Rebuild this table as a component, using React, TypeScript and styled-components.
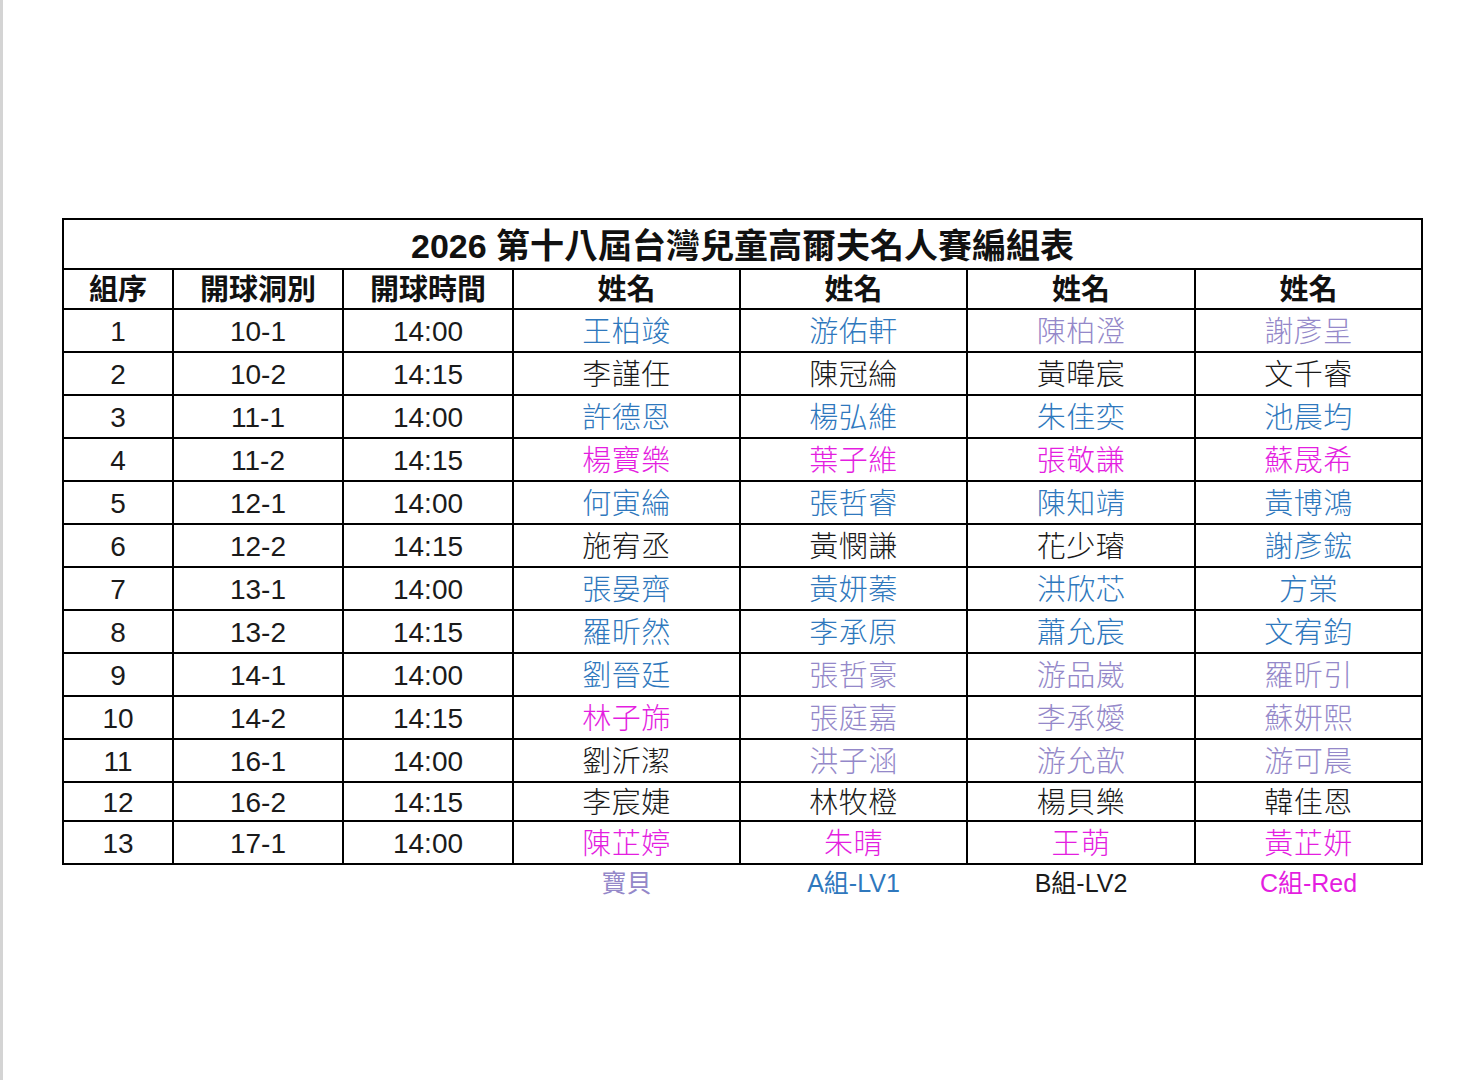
import styled, {createGlobalStyle} from 'styled-components';

const GlobalStyle = createGlobalStyle`
  html, body {
    margin: 0;
    padding: 0;
    background: #ffffff;
  }
`;

type Tone = 'black' | 'blue' | 'lavender' | 'magenta';

const toneColor: Record<Tone, string> = {
  black: '#1a1a1a',
  blue: '#2f78bd',
  lavender: '#9488c9',
  magenta: '#e41ee0',
};

const Page = styled.div`
  box-sizing: border-box;
  min-height: 100vh;
  border-left: 3px solid #d4d4d4;
  padding: 218px 0 0 59px;
  font-family: 'Liberation Sans', 'Noto Sans CJK TC', sans-serif;
  color: #111111;
`;

const Sheet = styled.table`
  border-collapse: collapse;
  table-layout: fixed;
  width: 1359px;
`;

const Row = styled.tr<{$h: number}>`
  height: ${({$h}) => $h}px;
`;

const TitleCell = styled.th`
  padding: 3px 0 0;
  border: 2px solid #000000;
  font-size: 34px;
  font-weight: 700;
  text-align: center;
  vertical-align: middle;
  line-height: 1;
`;

const HeadCell = styled.th`
  padding: 3px 0 0;
  border: 2px solid #000000;
  font-size: 29px;
  font-weight: 700;
  text-align: center;
  vertical-align: middle;
  line-height: 1;
`;

const Cell = styled.td<{$tone?: Tone}>`
  padding: 3px 0 0;
  border: 2px solid #000000;
  font-size: 28px;
  font-weight: 400;
  text-align: center;
  vertical-align: middle;
  line-height: 1;
  color: ${({$tone}) => toneColor[$tone ?? 'black']};
`;

const NameCell = styled(Cell)`
  font-size: 29px;
  font-weight: 300;
  letter-spacing: 0.5px;
`;

const Legend = styled.td<{$tone: Tone}>`
  padding: 0;
  border: none;
  font-size: 25px;
  text-align: center;
  vertical-align: middle;
  line-height: 1;
  color: ${({$tone}) => toneColor[$tone]};
`;

type Entry = [string, Tone];

const rows: {no: string; hole: string; time: string; names: Entry[]; h: number}[] = [
  {no: '1', hole: '10-1', time: '14:00', h: 43, names: [['王柏竣', 'blue'], ['游佑軒', 'blue'], ['陳柏澄', 'lavender'], ['謝彥呈', 'lavender']]},
  {no: '2', hole: '10-2', time: '14:15', h: 43, names: [['李謹任', 'black'], ['陳冠綸', 'black'], ['黃暐宸', 'black'], ['文千睿', 'black']]},
  {no: '3', hole: '11-1', time: '14:00', h: 43, names: [['許德恩', 'blue'], ['楊弘維', 'blue'], ['朱佳奕', 'blue'], ['池晨均', 'blue']]},
  {no: '4', hole: '11-2', time: '14:15', h: 43, names: [['楊寶樂', 'magenta'], ['葉子維', 'magenta'], ['張敬謙', 'magenta'], ['蘇晟希', 'magenta']]},
  {no: '5', hole: '12-1', time: '14:00', h: 43, names: [['何寅綸', 'blue'], ['張哲睿', 'blue'], ['陳知靖', 'blue'], ['黃博鴻', 'blue']]},
  {no: '6', hole: '12-2', time: '14:15', h: 43, names: [['施宥丞', 'black'], ['黃憫謙', 'black'], ['花少璿', 'black'], ['謝彥鋐', 'blue']]},
  {no: '7', hole: '13-1', time: '14:00', h: 43, names: [['張晏齊', 'blue'], ['黃妍蓁', 'blue'], ['洪欣芯', 'blue'], ['方棠', 'blue']]},
  {no: '8', hole: '13-2', time: '14:15', h: 43, names: [['羅昕然', 'blue'], ['李承原', 'blue'], ['蕭允宸', 'blue'], ['文宥鈞', 'blue']]},
  {no: '9', hole: '14-1', time: '14:00', h: 43, names: [['劉晉廷', 'blue'], ['張哲豪', 'lavender'], ['游品崴', 'lavender'], ['羅昕引', 'lavender']]},
  {no: '10', hole: '14-2', time: '14:15', h: 43, names: [['林子旆', 'magenta'], ['張庭嘉', 'lavender'], ['李承嬡', 'lavender'], ['蘇妍熙', 'lavender']]},
  {no: '11', hole: '16-1', time: '14:00', h: 43, names: [['劉沂潔', 'black'], ['洪子涵', 'lavender'], ['游允歆', 'lavender'], ['游可晨', 'lavender']]},
  {no: '12', hole: '16-2', time: '14:15', h: 39, names: [['李宸婕', 'black'], ['林牧橙', 'black'], ['楊貝樂', 'black'], ['韓佳恩', 'black']]},
  {no: '13', hole: '17-1', time: '14:00', h: 43, names: [['陳芷婷', 'magenta'], ['朱晴', 'magenta'], ['王萌', 'magenta'], ['黃芷妍', 'magenta']]},
];

const legend: Entry[] = [
  ['寶貝', 'lavender'],
  ['A組-LV1', 'blue'],
  ['B組-LV2', 'black'],
  ['C組-Red', 'magenta'],
];

const widths = [110, 170, 170, 227, 227, 228, 227];

export default function App() {
  return (
    <Page>
      <GlobalStyle />
      <Sheet>
        <colgroup>
          {widths.map((w, i) => (
            <col key={i} style={{width: w}} />
          ))}
        </colgroup>
        <thead>
          <Row $h={50}>
            <TitleCell colSpan={7}>2026 第十八屆台灣兒童高爾夫名人賽編組表</TitleCell>
          </Row>
          <Row $h={40}>
            <HeadCell>組序</HeadCell>
            <HeadCell>開球洞別</HeadCell>
            <HeadCell>開球時間</HeadCell>
            <HeadCell>姓名</HeadCell>
            <HeadCell>姓名</HeadCell>
            <HeadCell>姓名</HeadCell>
            <HeadCell>姓名</HeadCell>
          </Row>
        </thead>
        <tbody>
          {rows.map(r => (
            <Row key={r.no} $h={r.h}>
              <Cell>{r.no}</Cell>
              <Cell>{r.hole}</Cell>
              <Cell>{r.time}</Cell>
              {r.names.map(([name, tone], i) => (
                <NameCell key={i} $tone={tone}>
                  {name}
                </NameCell>
              ))}
            </Row>
          ))}
        </tbody>
        <tfoot>
          <Row $h={38}>
            <Legend $tone="black" />
            <Legend $tone="black" />
            <Legend $tone="black" />
            {legend.map(([label, tone]) => (
              <Legend key={label} $tone={tone}>
                {label}
              </Legend>
            ))}
          </Row>
        </tfoot>
      </Sheet>
    </Page>
  );
}
